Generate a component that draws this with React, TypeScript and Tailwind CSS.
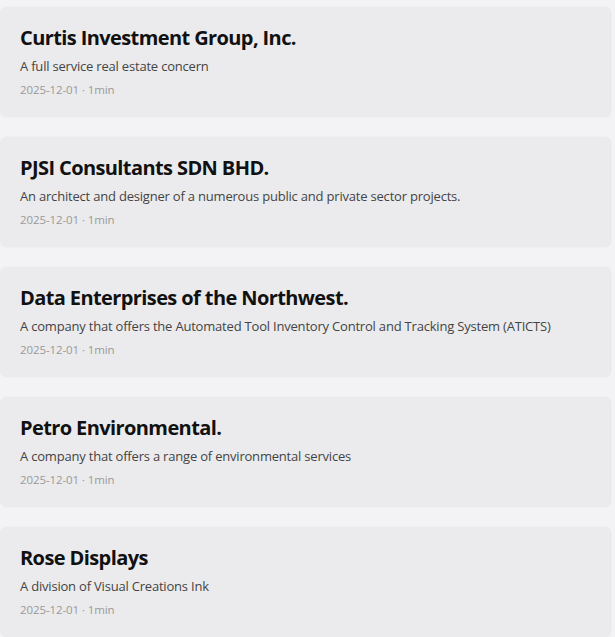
const posts = [
  {
    title: 'Curtis Investment Group, Inc.',
    summary: 'A full service real estate concern',
  },
  {
    title: 'PJSI Consultants SDN BHD.',
    summary: 'An architect and designer of a numerous public and private sector projects.',
  },
  {
    title: 'Data Enterprises of the Northwest.',
    summary: 'A company that offers the Automated Tool Inventory Control and Tracking System (ATICTS)',
  },
  {
    title: 'Petro Environmental.',
    summary: 'A company that offers a range of environmental services',
  },
  {
    title: 'Rose Displays',
    summary: 'A division of Visual Creations Ink',
  },
];

export default function App() {
  return (
    <div
      className="min-h-screen bg-[#f3f3f5] pt-[7px] pr-[5px]"
      style={{ fontFamily: '"Open Sans", "Noto Sans", sans-serif' }}
    >
      <div className="flex flex-col gap-5">
        {posts.map((post) => (
          <div
            key={post.title}
            className="h-[110px] rounded-md bg-[#ebebed] px-5 pt-[17px] shadow-[1px_0_2px_rgba(0,0,0,0.06)]"
          >
            <h2 className="text-[20px] font-bold leading-7 tracking-[-0.6px] text-[#111]">{post.title}</h2>
            <p className="mt-[4px] text-[13px] leading-5 tracking-[-0.2px] text-[#444]">{post.summary}</p>
            <p className="mt-[4px] text-[11.5px] leading-5 tracking-[-0.1px] text-[#999]">2025-12-01 · 1min</p>
          </div>
        ))}
      </div>
    </div>
  );
}
